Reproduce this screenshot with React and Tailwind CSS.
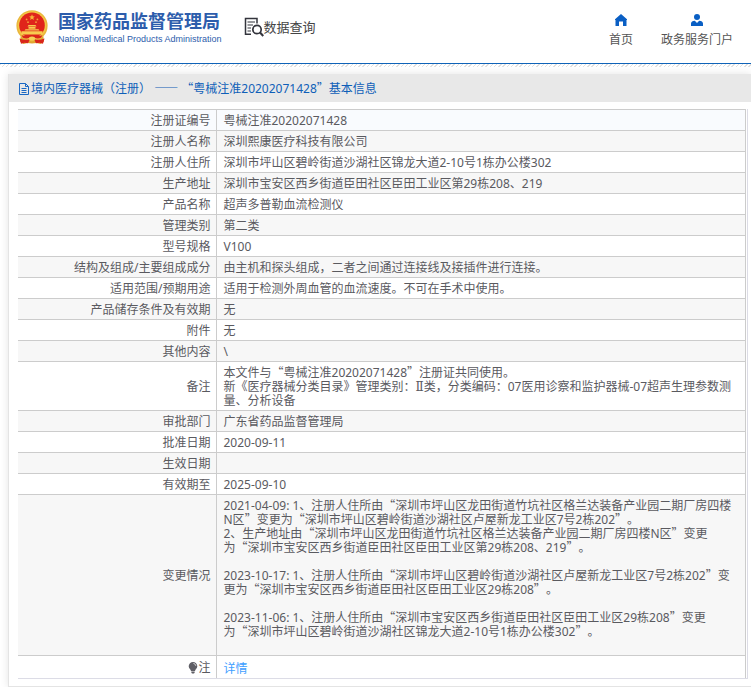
import React from 'react';
import clsx from 'clsx';

const rows = [
  { label: '注册证编号', value: '粤械注准20202071428' },
  { label: '注册人名称', value: '深圳熙康医疗科技有限公司' },
  { label: '注册人住所', value: '深圳市坪山区碧岭街道沙湖社区锦龙大道2-10号1栋办公楼302' },
  { label: '生产地址', value: '深圳市宝安区西乡街道臣田社区臣田工业区第29栋208、219' },
  { label: '产品名称', value: '超声多普勒血流检测仪' },
  { label: '管理类别', value: '第二类' },
  { label: '型号规格', value: 'V100' },
  { label: '结构及组成/主要组成成分', value: '由主机和探头组成，二者之间通过连接线及接插件进行连接。' },
  { label: '适用范围/预期用途', value: '适用于检测外周血管的血流速度。不可在手术中使用。' },
  { label: '产品储存条件及有效期', value: '无' },
  { label: '附件', value: '无' },
  { label: '其他内容', value: '\\' },
  {
    label: '备注',
    value:
      '本文件与“粤械注准20202071428”注册证共同使用。\n新《医疗器械分类目录》管理类别：Ⅱ类，分类编码：07医用诊察和监护器械-07超声生理参数测量、分析设备',
  },
  { label: '审批部门', value: '广东省药品监督管理局' },
  { label: '批准日期', value: '2020-09-11' },
  { label: '生效日期', value: '' },
  { label: '有效期至', value: '2025-09-10' },
  {
    label: '变更情况',
    value:
      '2021-04-09: 1、注册人住所由“深圳市坪山区龙田街道竹坑社区格兰达装备产业园二期厂房四楼N区”变更为“深圳市坪山区碧岭街道沙湖社区卢屋新龙工业区7号2栋202”。\n2、生产地址由“深圳市坪山区龙田街道竹坑社区格兰达装备产业园二期厂房四楼N区”变更为“深圳市宝安区西乡街道臣田社区臣田工业区第29栋208、219”。\n\n2023-10-17: 1、注册人住所由“深圳市坪山区碧岭街道沙湖社区卢屋新龙工业区7号2栋202”变更为“深圳市宝安区西乡街道臣田社区臣田工业区29栋208”。\n\n2023-11-06: 1、注册人住所由“深圳市宝安区西乡街道臣田社区臣田工业区29栋208”变更为“深圳市坪山区碧岭街道沙湖社区锦龙大道2-10号1栋办公楼302”。\n\n ',
  },
];

// Chinese quotes and dashes need the full-width glyphs of the CJK font.
// The word joiner keeps an opening quote on the line of the character before it.
function ZhText({ children }) {
  return children
    .replace(/为“/g, '为\u2060“')
    .split(/([“”—Ⅱ]+)/)
    .map((part, i) =>
      i % 2 ? (
        <span
          key={i}
          className={clsx(
            'leading-0',
            part === 'Ⅱ' ? "font-['DejaVu_Serif',serif]" : "font-['Noto_Sans_CJK_SC',sans-serif]",
          )}
        >
          {part}
        </span>
      ) : (
        part
      ),
    );
}

function Emblem() {
  return (
    <svg viewBox="0 0 32 35" className="h-[35px] w-8 shrink-0" aria-hidden="true">
      <path d="M5 24h22l1 7.500-3.500 2.500-4-1-4.500.6-4.500-.6-4 1L4 31.500z" fill="#e0a52f" />
      <circle cx="16" cy="15.800" r="15.600" fill="#e9b63c" />
      <circle cx="16" cy="15.500" r="14.200" fill="#f3c746" />
      <circle cx="16" cy="15.200" r="12.800" fill="#e0241b" />
      <path d="M16 4.200l.8 2 2.100.2-1.600 1.400.5 2.100-1.800-1.100-1.800 1.100.5-2.100-1.600-1.400 2.100-.2z" fill="#f7b53a" />
      <circle cx="10.600" cy="9.400" r=".9" fill="#f2a036" />
      <circle cx="21.400" cy="9.400" r=".9" fill="#f2a036" />
      <circle cx="12" cy="12.200" r=".9" fill="#f2a036" />
      <circle cx="20" cy="12.200" r=".9" fill="#f2a036" />
      <path d="M11.500 16.400l1-1.400h7l1 1.400zM12.500 17h7v1.800h-7zM8.500 20.600l1-1.400h13l1 1.400zM5.500 21.300h21v3.200h-21z" fill="#f8cb50" />
      <path d="M5.500 25.200c3.500 1.200 7 1 10.500-.2 3.500 1.200 7 1.400 10.500.2l-1.500 2.600c-3 1-6 .7-9-.7-3 1.400-6 1.700-9 .7z" fill="#d9251b" />
      <path d="M3.500 28.500c4 1.900 7.500 1.600 10.500.4l-2 4.400-3.500-.6-3.500 1zM28.500 28.500c-4 1.900-7.500 1.600-10.500.4l2 4.400 3.500-.6 3.500 1z" fill="#d9251b" />
      <ellipse cx="16" cy="28.600" rx="3.200" ry="2" fill="#f6cf57" />
    </svg>
  );
}

function SearchDocIcon() {
  return (
    <svg viewBox="0 0 20 20" className="size-5 shrink-0" fill="none" stroke="#33343c" aria-hidden="true">
      <path d="M7 17.200H1.500V1.500h11.500v5" strokeWidth="1.500" />
      <path d="M3.500 5h7.500M3.500 8h5.500M3.500 11h3.500M3.500 14h3.500" strokeWidth="1.200" />
      <circle cx="13" cy="12.500" r="4.200" strokeWidth="1.700" />
      <path d="M16 15.500l3.300 3.500" strokeWidth="2.200" />
    </svg>
  );
}

function HomeIcon() {
  return (
    <svg viewBox="0 0 12 12" className="size-3" fill="#0a5fc4" aria-hidden="true">
      <path d="M6 0l6 5.200V6h-.5v6H8V7.500H4V12H.5V6H0v-.8z" />
    </svg>
  );
}

function UserIcon() {
  return (
    <svg viewBox="0 0 12 12" className="size-3" fill="#0a5fc4" aria-hidden="true">
      <circle cx="6" cy="3" r="3" />
      <path d="M0 12V9.500C0 8 1.500 7 3.800 6.800L6 9l2.200-2.200C10.500 7 12 8 12 9.500V12z" />
    </svg>
  );
}

function DocIcon() {
  return (
    <svg viewBox="0 0 12 12" className="size-3 shrink-0" fill="none" stroke="#1a68c4" aria-hidden="true">
      <path d="M1.500.5h6l3 3v8h-9zM7.500.5v3h3M3.500 5.500h5M3.500 7.500h5M3.500 9.500h5" />
    </svg>
  );
}

function BulbIcon() {
  return (
    <svg viewBox="0 0 10 12" className="h-3 w-[10px]" fill="#5f5f66" aria-hidden="true">
      <path d="M5 0a4.300 4.300 0 0 1 4.300 4.300C9.300 6.500 7.300 7.300 7 9H3C2.700 7.300.7 6.500.7 4.300A4.300 4.300 0 0 1 5 0zM3.300 9.500h3.400v1L6 11.500H4l-.7-1z" />
      <path d="M5.500 1.500c1.300.2 2.100 1 2.300 2.300" stroke="#fff" strokeWidth=".8" fill="none" />
    </svg>
  );
}

function NavLink({ icon, children }) {
  return (
    <a href="#" className="flex flex-col items-center gap-1 text-[#555]">
      {icon}
      <span className="leading-5">{children}</span>
    </a>
  );
}

function InfoRow({ label, value, index }) {
  return (
    <tr className={clsx(index === 0 ? 'bg-[#f9fbfe]' : index % 2 ? 'bg-[#f7f7f7]' : 'bg-white')}>
      <th scope="row" className="border border-l-0 border-[#ccc] pt-1 pr-[5px] pb-[2px] text-right font-normal">
        {label}
      </th>
      <td className="border border-[#ccc] px-[7px] pt-1 pb-[2px] whitespace-pre-line">
        <ZhText>{value}</ZhText>
      </td>
    </tr>
  );
}

export default function App() {
  return (
    <div
      lang="zh-CN"
      className="bg-white font-['Noto_Sans','Noto_Sans_CJK_SC',sans-serif] text-xs text-[#5a5a5f] [text-spacing-trim:space-all]"
    >
      <header className="flex h-16 items-start border-b border-[#0f63b8] pr-[18px] pl-4">
        <a href="#" className="flex items-center gap-[10px] pt-[9px]">
          <Emblem />
          <span className="flex flex-col text-[#2d5dac]">
            <span className="text-lg leading-6 font-bold">国家药品监督管理局</span>
            <span className="font-['Liberation_Sans',sans-serif] text-[9px] leading-3">
              National Medical Products Administration
            </span>
          </span>
        </a>
        <a href="#" className="ml-[22px] flex items-center pt-[17px] text-[13px] leading-5 text-[#444]">
          <SearchDocIcon />
          数据查询
        </a>
        <nav className="ml-auto flex gap-7 pt-[14px]">
          <NavLink icon={<HomeIcon />}>首页</NavLink>
          <NavLink icon={<UserIcon />}>政务服务门户</NavLink>
        </nav>
      </header>
      <div className="h-[3px] bg-[repeating-linear-gradient(135deg,#e0e0e0_0_1px,#fff_1px_3px)]" />

      <main className="mt-[7px] ml-2 border-b border-l border-[#e4e4e4] pb-[7px] shadow-[0_0_8px_#e4e4e4]">
        <h1 className="flex h-7 items-center gap-px bg-[#e8e8e8] pt-[2px] pl-[9px] text-[#0f5fb8]">
          <DocIcon />
          <span className="whitespace-pre">
            <ZhText>境内医疗器械（注册） —— “粤械注准20202071428”基本信息</ZhText>
          </span>
        </h1>
        <div className="mt-[7px] mr-[3px] ml-[9px] border-r border-b border-[#dcdce6] pr-px">
          <table className="w-full table-fixed border-collapse leading-[14px]">
            <colgroup>
              <col className="w-[198px]" />
              <col />
            </colgroup>
            <tbody>
              {rows.map((row, i) => (
                <InfoRow key={row.label} index={i} {...row} />
              ))}
              <tr>
                <th scope="row" className="border-r border-[#ccc] pt-1 pr-[5px] pb-[2px] font-normal">
                  <span className="flex items-center justify-end leading-4">
                    <BulbIcon />注
                  </span>
                </th>
                <td className="border-r border-[#ccc] px-[7px] pt-[5px] pb-px leading-4">
                  <a href="#" className="text-[#409eff]">
                    详情
                  </a>
                </td>
              </tr>
            </tbody>
          </table>
        </div>
      </main>
    </div>
  );
}
